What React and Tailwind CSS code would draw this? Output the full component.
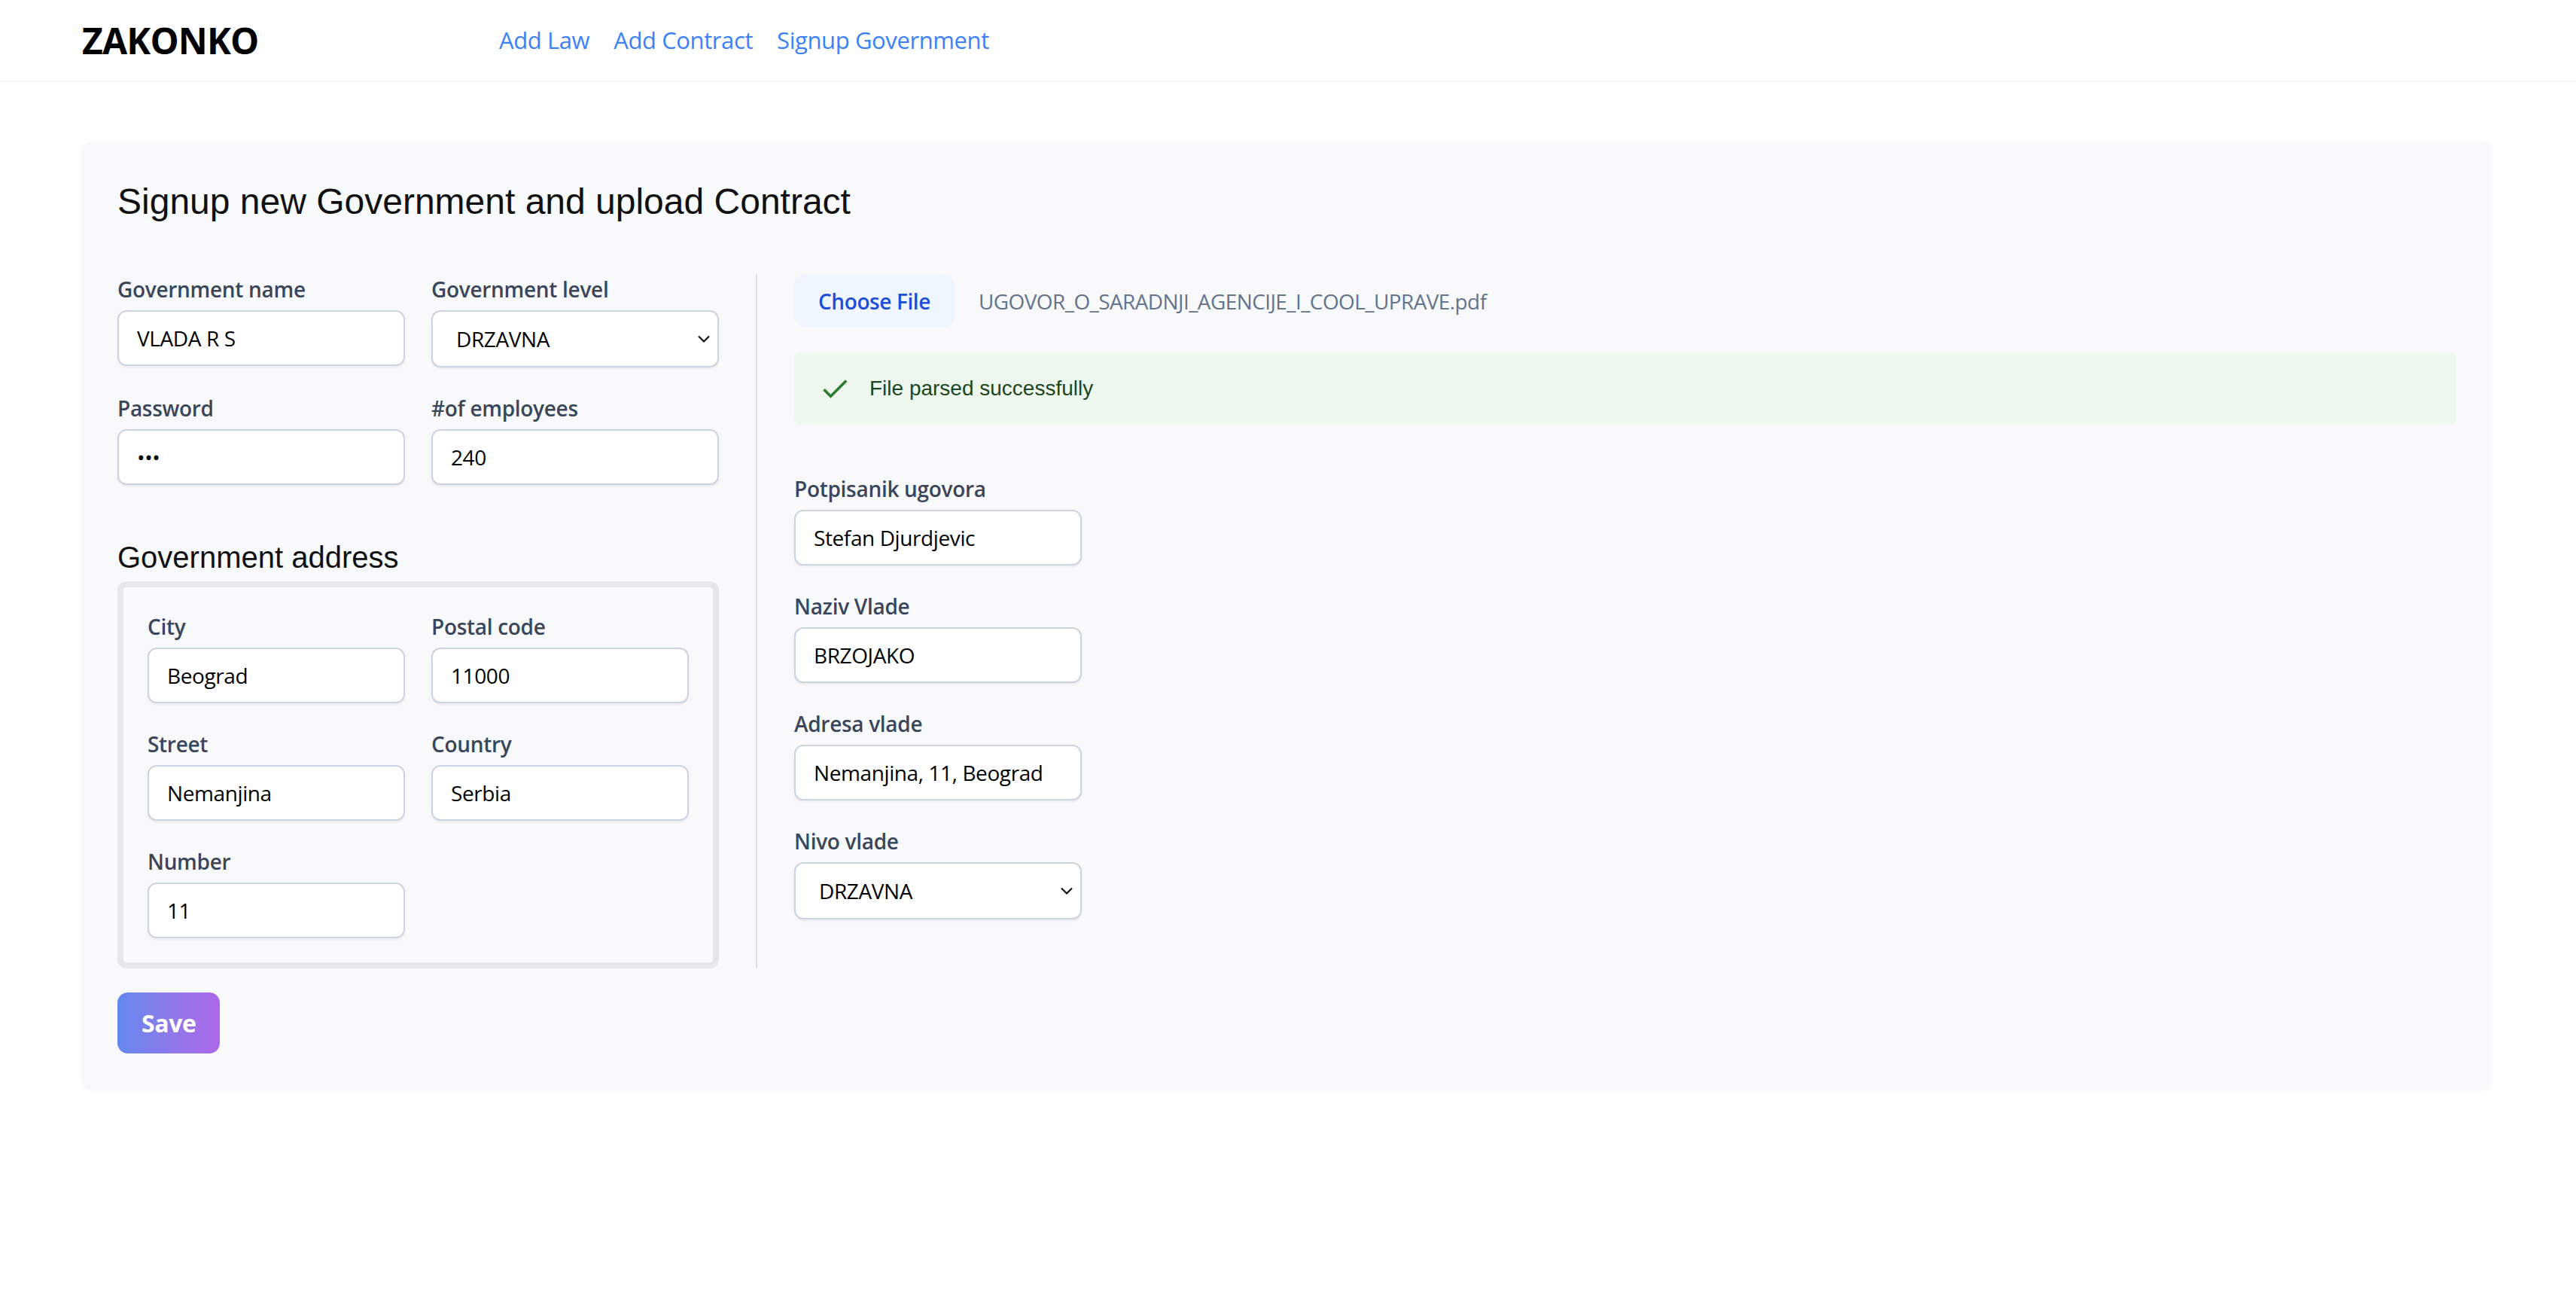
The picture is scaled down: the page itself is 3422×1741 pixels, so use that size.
import React from "react";

function Label({ children }) {
  return (
    <label className="block h-[40px] text-[28px] leading-[40px] font-semibold tracking-[-0.3px] text-[#3a4659]">
      {children}
    </label>
  );
}

function Field({ label, value, type = "text" }) {
  return (
    <div className="flex flex-col">
      <Label>{label}</Label>
      <input
        type={type}
        defaultValue={value}
        readOnly
        className="mt-[8px] h-[74px] w-full rounded-[12px] border-2 border-[#cbd5e1] bg-white px-[24px] text-[28px] tracking-[-0.4px] text-black shadow-[0_2px_3px_rgba(0,0,0,0.06)] outline-none"
      />
    </div>
  );
}

function SelectField({ label, value }) {
  return (
    <div className="flex flex-col">
      <Label>{label}</Label>
      <div className="relative mt-[8px]">
        <select
          defaultValue={value}
          className="h-[76px] w-full appearance-none rounded-[12px] border-2 border-[#cbd5e1] bg-white pl-[31px] pr-[60px] text-[28px] tracking-[-0.4px] text-black shadow-[0_2px_3px_rgba(0,0,0,0.06)] outline-none"
        >
          <option>DRZAVNA</option>
          <option>POKRAJINSKA</option>
          <option>LOKALNA</option>
        </select>
        <svg
          className="pointer-events-none absolute right-[10px] top-[31px] h-[14px] w-[20px]"
          viewBox="0 0 20 14"
          fill="none"
          stroke="#111"
          strokeWidth="2.2"
        >
          <path d="M3 3.5 L10 10.5 L17 3.5" />
        </svg>
      </div>
    </div>
  );
}

export default function App() {
  return (
    <div className="min-h-[1741px] bg-white font-['Open_Sans',sans-serif] text-black">
      <header className="flex h-[107px] items-center px-[109px] shadow-[0_2px_3px_rgba(0,0,0,0.04)]">
        <div className="w-[554px] text-[48px] leading-[64px] font-bold tracking-[-0.8px] text-black">
          ZAKONKO
        </div>
        <nav className="flex items-center gap-[32px] text-[31px] tracking-[-0.4px] text-[#3b82f6]">
          <a href="#">Add Law</a>
          <a href="#">Add Contract</a>
          <a href="#">Signup Government</a>
        </nav>
      </header>

      <main className="pl-[108px] pr-[111px] pt-[81px]">
        <div className="rounded-[14px] bg-[#f8f9fb] p-[48px] shadow-[0_1px_3px_rgba(0,0,0,0.04)]">
          <h1 className="h-[64px] font-['Liberation_Sans',Arial,sans-serif] text-[48px] leading-[64px] text-[#111]">
            Signup new Government and upload Contract
          </h1>

          <div className="mt-[64px] flex">
            {/* left column */}
            <div className="w-[799px] shrink-0">
              <div className="grid grid-cols-2 gap-x-[35px] gap-y-[34px]">
                <Field label="Government name" value="VLADA R S" />
                <SelectField label="Government level" value="DRZAVNA" />
                <Field label="Password" value="abc" type="password" />
                <Field label="#of employees" value="240" />
              </div>

              <h2 className="mt-[64px] h-[64px] font-['Liberation_Sans',Arial,sans-serif] text-[40px] leading-[64px] text-[#111]">
                Government address
              </h2>

              <div className="grid grid-cols-2 gap-x-[35px] gap-y-[34px] rounded-[12px] border-8 border-[#e5e7eb] p-[32px]">
                <Field label="City" value="Beograd" />
                <Field label="Postal code" value="11000" />
                <Field label="Street" value="Nemanjina" />
                <Field label="Country" value="Serbia" />
                <Field label="Number" value="11" />
              </div>
            </div>

            {/* divider */}
            <div className="mx-[49px] w-[2px] shrink-0 self-stretch bg-[#dcdfe4]" />

            {/* right column */}
            <div className="flex min-w-0 flex-1 flex-col">
              <div className="flex items-center">
                <button className="h-[71px] rounded-[16px] bg-[#eff6ff] px-[32px] text-[28px] font-semibold tracking-[-0.4px] text-[#1d4ed8]">
                  Choose File
                </button>
                <span className="ml-[32px] text-[28px] tracking-[-0.6px] text-[#64748b]">
                  UGOVOR_O_SARADNJI_AGENCIJE_I_COOL_UPRAVE.pdf
                </span>
              </div>

              <div className="mt-[33px] flex h-[96px] items-center rounded-[8px] bg-[#edf7ed] px-[32px]">
                <svg className="mr-[24px] h-[44px] w-[44px]" viewBox="0 0 24 24" fill="#2e7d32">
                  <path d="M9 16.17 4.83 12l-1.42 1.41L9 19 21 7l-1.41-1.41z" />
                </svg>
                <span className="font-['Liberation_Sans',Arial,sans-serif] text-[28px] leading-[40px] text-[#1e4620]">
                  File parsed successfully
                </span>
              </div>

              <div className="mt-[65px] flex w-[382px] flex-col gap-[34px]">
                <Field label="Potpisanik ugovora" value="Stefan Djurdjevic" />
                <Field label="Naziv Vlade" value="BRZOJAKO" />
                <Field label="Adresa vlade" value="Nemanjina, 11, Beograd" />
                <SelectField label="Nivo vlade" value="DRZAVNA" />
              </div>
            </div>
          </div>

          <button className="mt-[32px] h-[81px] rounded-[14px] bg-linear-to-r from-[#6388ee] to-[#ab67e8] px-[32px] text-[32px] font-bold tracking-[-0.4px] text-white">
            Save
          </button>
        </div>
      </main>
    </div>
  );
}
